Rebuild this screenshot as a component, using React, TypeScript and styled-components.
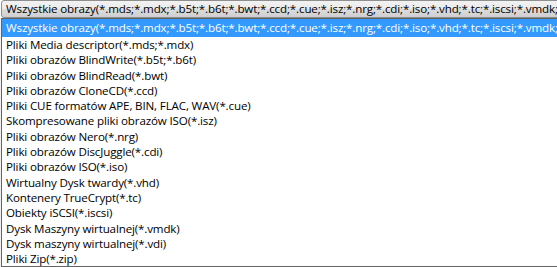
import React from "react";
import styled, { createGlobalStyle } from "styled-components";

const GlobalStyle = createGlobalStyle`
  html, body {
    margin: 0;
    padding: 0;
    background: #ffffff;
    overflow: hidden;
  }
`;

const FILTERS = [
  "Wszystkie obrazy(*.mds;*.mdx;*.b5t;*.b6t;*.bwt;*.ccd;*.cue;*.isz;*.nrg;*.cdi;*.iso;*.vhd;*.tc;*.iscsi;*.vmdk;*.vdi;*.zip)",
  "Pliki Media descriptor(*.mds;*.mdx)",
  "Pliki obrazów BlindWrite(*.b5t;*.b6t)",
  "Pliki obrazów BlindRead(*.bwt)",
  "Pliki obrazów CloneCD(*.ccd)",
  "Pliki CUE formatów APE, BIN, FLAC, WAV(*.cue)",
  "Skompresowane pliki obrazów ISO(*.isz)",
  "Pliki obrazów Nero(*.nrg)",
  "Pliki obrazów DiscJuggle(*.cdi)",
  "Pliki obrazów ISO(*.iso)",
  "Wirtualny Dysk twardy(*.vhd)",
  "Kontenery TrueCrypt(*.tc)",
  "Obiekty iSCSI(*.iscsi)",
  "Dysk Maszyny wirtualnej(*.vmdk)",
  "Dysk maszyny wirtualnej(*.vdi)",
  "Pliki Zip(*.zip)",
];

const App = () => {
  return (
    <Screen>
      <GlobalStyle />
      <ComboBox>
        <ComboText>{FILTERS[0]}</ComboText>
      </ComboBox>
      <DropList>
        {FILTERS.map((f, i) => (
          <ListItem key={f} $selected={i === 0}>
            {f}
          </ListItem>
        ))}
      </DropList>
    </Screen>
  );
};

const Screen = styled.div`
  width: 557px;
  height: 267px;
  overflow: hidden;
  display: flex;
  flex-direction: column;
  font-family: "Open Sans", "Liberation Sans", sans-serif;
  font-size: 11.6px;
  letter-spacing: -0.15px;
  color: #000;
`;

const ComboBox = styled.div`
  width: 640px;
  height: 18px;
  flex-shrink: 0;
  margin-left: 1px;
  box-sizing: border-box;
  border: 1px solid #8e8f8f;
  border-radius: 3px;
  background: linear-gradient(180deg, #f2f2f2 0%, #ebebeb 50%, #dddddd 51%, #cfcfcf 100%);
  display: flex;
  align-items: center;
  padding-left: 4px;
`;

const ComboText = styled.div`
  white-space: nowrap;
  line-height: 16px;
`;

const DropList = styled.div`
  width: 640px;
  margin-left: 1px;
  box-sizing: border-box;
  border: 1px solid #646464;
  border-right: none;
  background: #fff;
  display: flex;
  flex-direction: column;
  flex-shrink: 0;
  box-shadow: 1px 2px 3px rgba(0, 0, 0, 0.35);
`;

const ListItem = styled.div<{ $selected?: boolean }>`
  height: ${(p) => (p.$selected ? "18px" : "15.3px")};
  line-height: ${(p) => (p.$selected ? "18px" : "15.3px")};
  padding-left: 4px;
  white-space: nowrap;
  background: ${(p) => (p.$selected ? "#3399ff" : "transparent")};
  color: ${(p) => (p.$selected ? "#ffffff" : "#000000")};
`;

export default App;
